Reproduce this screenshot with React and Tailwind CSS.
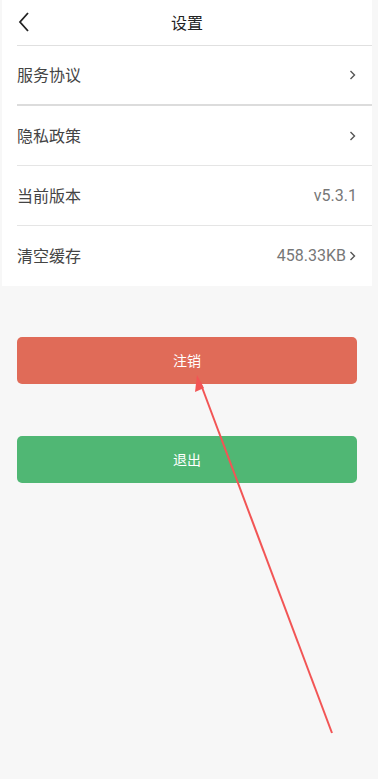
import React from 'react';

const font = { fontFamily: '"Noto Sans", "Noto Sans CJK SC", sans-serif' };
const latin = { fontFamily: 'Roboto, "Noto Sans CJK SC", sans-serif' };

const Chevron = () => (
    <svg width="8" height="12" viewBox="0 0 8 12" className="ml-[3px]">
        <path d="M1.5 2 L5.5 6 L1.5 10" fill="none" stroke="#555" strokeWidth="1.4" />
    </svg>
);

const rows = [
    { label: '服务协议', arrow: true, border: 'border-b-2 border-[#dcdcdc]' },
    { label: '隐私政策', arrow: true, border: 'border-b border-[#e5e5e5]' },
    { label: '当前版本', value: 'v5.3.1', border: 'border-b border-[#e5e5e5]' },
    { label: '清空缓存', value: '458.33KB', arrow: true },
];

export default function App() {
    return (
        <div className="relative w-[378px] h-[779px] bg-[#f7f7f7] overflow-hidden" style={font}>
            <div className="ml-[2px] w-[370px] bg-white">
                <div className="relative h-[45px] flex items-center justify-center">
                    <svg width="14" height="22" viewBox="0 0 14 22" className="absolute left-[15px] top-[11px]">
                        <path d="M11 2 L3 11 L11 20" fill="none" stroke="#222" strokeWidth="1.8" />
                    </svg>
                    <span className="text-[16px] text-[#222]">设置</span>
                </div>
                <div className="pl-[15px]">
                    <div className="border-t border-[#e0e0e0]" />
                    {rows.map((r) => (
                        <div
                            key={r.label}
                            className={`h-[60px] flex items-center justify-between pr-[15px] ${r.border || ''}`}
                        >
                            <span className="text-[16px] text-[#444]">{r.label}</span>
                            <span className="flex items-center text-[16px] text-[#777]" style={latin}>
                                {r.value}
                                {r.arrow && <Chevron />}
                            </span>
                        </div>
                    ))}
                </div>
            </div>

            <div className="px-[17px] pt-[51px] flex flex-col gap-[52px] w-[374px]">
                <button className="h-[47px] rounded-[5px] bg-[#e06b58] text-white text-[14px]">注销</button>
                <button className="h-[47px] rounded-[5px] bg-[#50b774] text-white text-[14px]">退出</button>
            </div>

            <svg className="absolute left-0 top-0 pointer-events-none" width="378" height="779">
                <line x1="332" y1="733" x2="200" y2="382" stroke="#f25555" strokeWidth="2" />
                <path d="M197 375 L195 392 L204 388 Z" fill="#f25555" />
            </svg>
        </div>
    );
}
